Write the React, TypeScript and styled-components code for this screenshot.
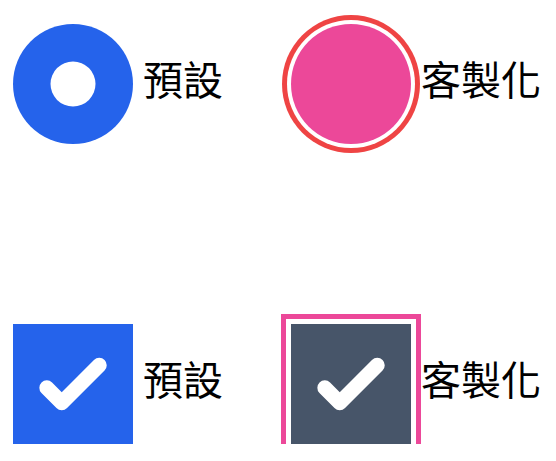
import styled, { createGlobalStyle } from "styled-components";

const GlobalStyle = createGlobalStyle`
  body {
    margin: 0;
    background: #fff;
    font-family: "Noto Sans CJK TC", "Noto Sans", sans-serif;
  }
`;

const Page = styled.div`
  display: grid;
  grid-template-columns: 278px 278px;
  grid-auto-rows: 120px;
  row-gap: 180px;
  padding: 24px 0 0 13px;
`;

const Option = styled.label`
  display: flex;
  align-items: center;
  gap: 10px;
`;

const Text = styled.span`
  font-size: 40px;
  line-height: 1;
  color: #000;
  margin-bottom: 13px;
`;

const Mark = styled.span<{ $shape: "circle" | "square"; $bg: string; $ring?: string; $offset?: number; $width?: number }>`
  flex: none;
  width: 120px;
  height: 120px;
  display: flex;
  align-items: center;
  justify-content: center;
  background: ${(p) => p.$bg};
  border-radius: ${(p) => (p.$shape === "circle" ? "50%" : "0")};
  box-shadow: ${(p) =>
    p.$ring
      ? `0 0 0 ${p.$offset}px #fff, 0 0 0 ${(p.$offset ?? 0) + (p.$width ?? 0)}px ${p.$ring}`
      : "none"};

  svg {
    width: 120px;
    height: 120px;
    display: block;
  }
`;

const Dot = () => (
  <svg viewBox="0 0 16 16" fill="#fff">
    <circle cx="8" cy="8" r="3" />
  </svg>
);

const Check = () => (
  <svg viewBox="0 0 16 16" fill="#fff">
    <path d="M12.207 4.793a1 1 0 010 1.414l-5 5a1 1 0 01-1.414 0l-2-2a1 1 0 011.414-1.414L6.5 9.086l4.293-4.293a1 1 0 011.414 0z" />
  </svg>
);

export default function App() {
  return (
    <>
      <GlobalStyle />
      <Page>
        <Option>
          <Mark $shape="circle" $bg="#2563eb">
            <Dot />
          </Mark>
          <Text>預設</Text>
        </Option>
        <Option>
          <Mark $shape="circle" $bg="#ec4899" $ring="#ef4444" $offset={4} $width={5} />
          <Text>客製化</Text>
        </Option>
        <Option>
          <Mark $shape="square" $bg="#2563eb">
            <Check />
          </Mark>
          <Text>預設</Text>
        </Option>
        <Option>
          <Mark $shape="square" $bg="#475569" $ring="#ec4899" $offset={5} $width={5}>
            <Check />
          </Mark>
          <Text>客製化</Text>
        </Option>
      </Page>
    </>
  );
}
